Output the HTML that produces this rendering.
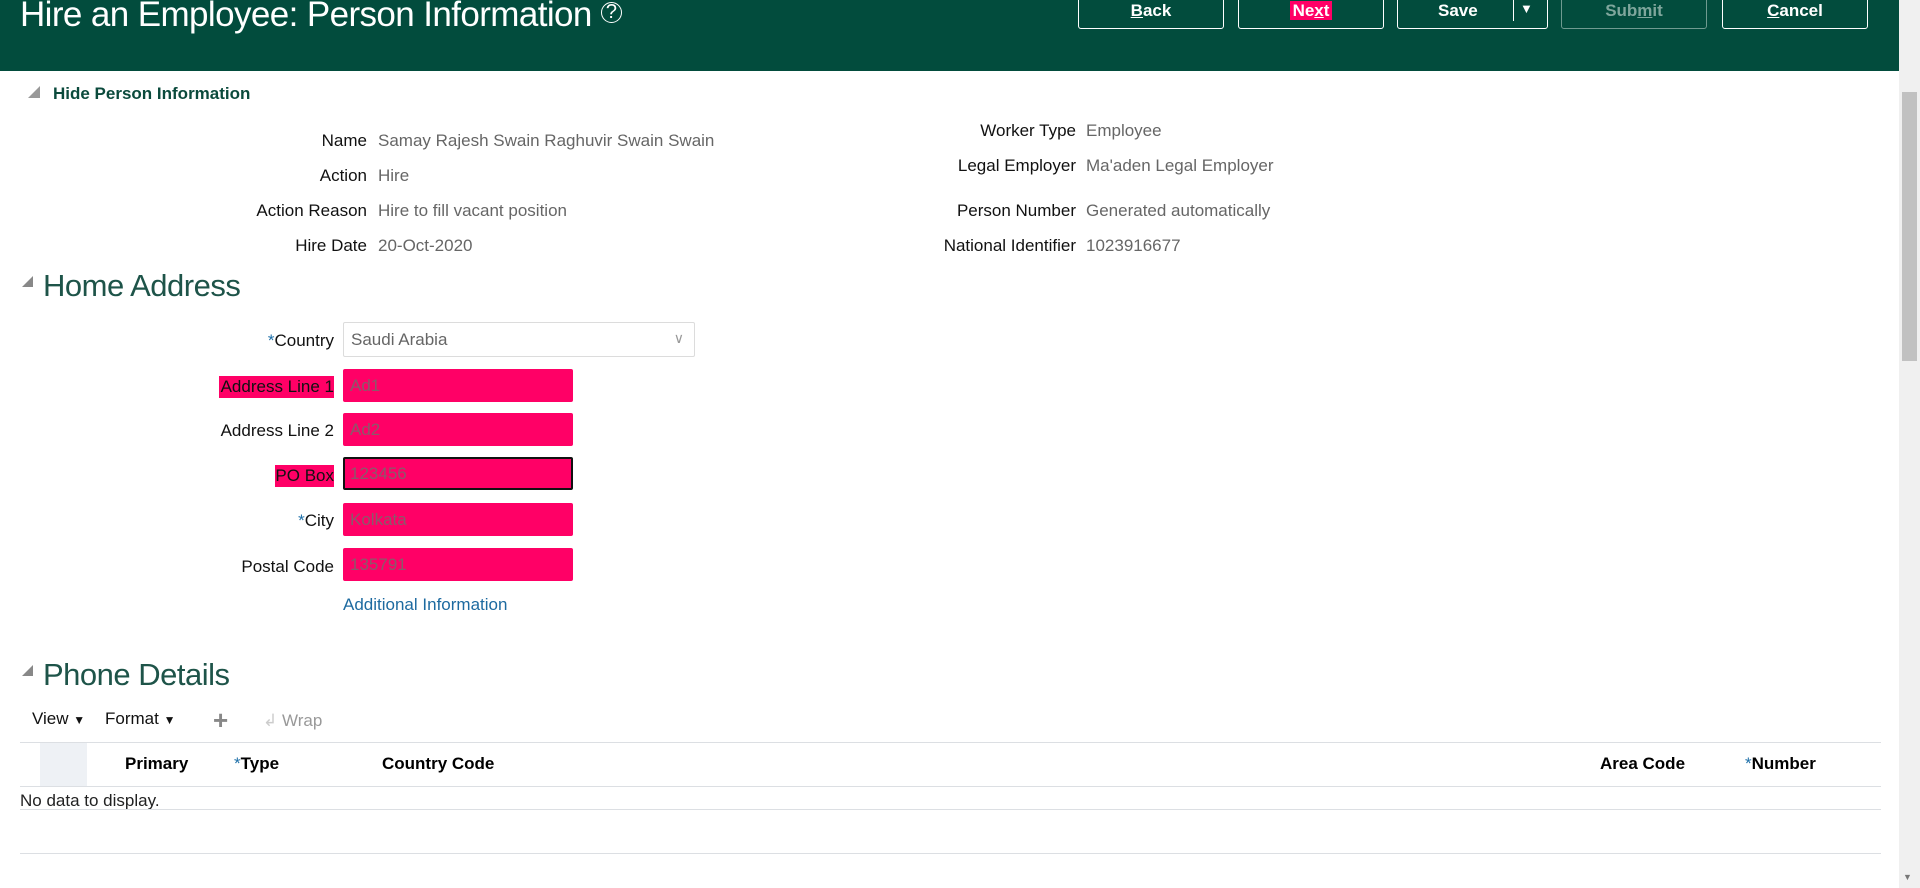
<!DOCTYPE html>
<html><head><meta charset="utf-8"><style>
*{margin:0;padding:0;box-sizing:border-box}
body{width:1920px;height:888px;overflow:hidden;background:#fff;font-family:"Liberation Sans",sans-serif;position:relative}
.a{position:absolute;white-space:nowrap}
.hdr{position:absolute;left:0;top:0;width:1899px;height:71px;background:#024c3d}
.btn{position:absolute;top:-4px;height:33px;border:1px solid #fff;border-radius:3px;color:#fff;font-size:17px;font-weight:bold;text-align:center;line-height:28px}
.lbl{position:absolute;text-align:right;font-size:17px;color:#111;line-height:20px}
.val{position:absolute;font-size:17px;color:#666;line-height:20px}
.inp{position:absolute;left:343px;width:230px;height:33px;background:#ff0066;border-radius:2px;color:#8a5a6a;font-size:17px;line-height:33px;padding-left:7px}
.star{color:#1d6fa8}
.th{position:absolute;top:754px;font-size:17px;font-weight:bold;color:#000;line-height:20px}
.hl{position:absolute;left:20px;width:1861px;height:1px;background:#dcdfe3}
</style></head><body>
<div class="hdr"></div>
<div class="a" style="left:20px;top:-7px;font-size:35px;color:#fff;font-weight:300;line-height:44px;letter-spacing:-0.6px">Hire an Employee: Person Information <span style="font-size:20px;display:inline-block;width:21px;height:21px;border:1.5px solid #fff;border-radius:50%;line-height:18px;text-align:center;vertical-align:8px;letter-spacing:0">?</span></div>
<div class="btn" style="left:1078px;width:146px"><u>B</u>ack</div>
<div class="btn" style="left:1238px;width:146px"><span style="background:#ff0066;padding:0 3px">Ne<u>x</u>t</span></div>
<div class="btn" style="left:1397px;width:151px;text-align:left;padding-left:40px">Save<span style="position:absolute;left:115px;top:0;width:1px;height:24px;background:#fff"></span><span style="position:absolute;left:122px;top:-2px;font-size:13px">▼</span></div>
<div class="btn" style="left:1561px;width:146px;border-color:#6f9a90;color:#7fa69c">Sub<u>m</u>it</div>
<div class="btn" style="left:1722px;width:146px"><u>C</u>ancel</div>
<div class="a" style="left:1899px;top:0;width:21px;height:888px;background:#f0f0f0"></div>
<div class="a" style="left:1902px;top:92px;width:15px;height:269px;background:#c1c1c1"></div>
<div class="a" style="left:1903px;top:872px;font-size:9px;color:#777">▼</div>
<div class="a" style="left:28px;top:86px;width:0;height:0;border-left:12px solid transparent;border-bottom:12px solid #999"></div>
<div class="a" style="left:53px;top:84px;font-size:17px;font-weight:bold;color:#0b4a3c">Hide Person Information</div>
<div class="lbl" style="right:1553px;top:131px">Name</div><div class="val" style="left:378px;top:131px">Samay Rajesh Swain Raghuvir Swain Swain</div>
<div class="lbl" style="right:1553px;top:166px">Action</div><div class="val" style="left:378px;top:166px">Hire</div>
<div class="lbl" style="right:1553px;top:201px">Action Reason</div><div class="val" style="left:378px;top:201px">Hire to fill vacant position</div>
<div class="lbl" style="right:1553px;top:236px">Hire Date</div><div class="val" style="left:378px;top:236px">20-Oct-2020</div>
<div class="lbl" style="right:844px;top:121px">Worker Type</div><div class="val" style="left:1086px;top:121px">Employee</div>
<div class="lbl" style="right:844px;top:156px">Legal Employer</div><div class="val" style="left:1086px;top:156px">Ma'aden Legal Employer</div>
<div class="lbl" style="right:844px;top:201px">Person Number</div><div class="val" style="left:1086px;top:201px">Generated automatically</div>
<div class="lbl" style="right:844px;top:236px">National Identifier</div><div class="val" style="left:1086px;top:236px">1023916677</div>
<div class="a" style="left:22px;top:276px;width:0;height:0;border-left:11px solid transparent;border-bottom:11px solid #888"></div>
<div class="a" style="left:43px;top:268px;font-size:31px;color:#1e5449;font-weight:300;letter-spacing:-0.5px">Home Address</div>
<div class="lbl" style="right:1586px;top:331px"><span class="star">*</span>Country</div>
<div class="a" style="left:343px;top:322px;width:352px;height:35px;border:1px solid #dcdcdc;border-radius:2px;font-size:17px;color:#666;line-height:33px;padding-left:7px">Saudi Arabia<span style="position:absolute;right:10px;top:-1px;color:#999;font-size:14px">&#8744;</span></div>
<div class="lbl" style="right:1586px;top:376px;background:#ff0066;padding:1px 0 1px 2px">Address Line 1</div>
<div class="inp" style="top:369px">Ad1</div>
<div class="lbl" style="right:1586px;top:421px">Address Line 2</div>
<div class="inp" style="top:413px">Ad2</div>
<div class="lbl" style="right:1586px;top:465px;background:#ff0066;padding:1px 0 1px 0">PO Box</div>
<div class="inp" style="top:457px;border:2px solid #111;line-height:29px;padding-left:5px">123456</div>
<div class="lbl" style="right:1586px;top:511px"><span class="star">*</span>City</div>
<div class="inp" style="top:503px">Kolkata</div>
<div class="lbl" style="right:1586px;top:557px">Postal Code</div>
<div class="inp" style="top:548px">135791</div>
<div class="a" style="left:343px;top:595px;font-size:17px;color:#1d6aa0">Additional Information</div>
<div class="a" style="left:22px;top:665px;width:0;height:0;border-left:11px solid transparent;border-bottom:11px solid #888"></div>
<div class="a" style="left:43px;top:657px;font-size:31px;color:#1e5449;font-weight:300;letter-spacing:-0.5px">Phone Details</div>
<div class="a" style="left:32px;top:709px;font-size:17px;color:#111">View <span style="font-size:12px">▼</span></div>
<div class="a" style="left:105px;top:709px;font-size:17px;color:#111">Format <span style="font-size:12px">▼</span></div>
<div class="a" style="left:213px;top:705px;font-size:26px;color:#888;font-weight:bold">+</div>
<div class="a" style="left:263px;top:711px;font-size:17px;color:#999"><span style="color:#ccc">&#8626;</span> Wrap</div>
<div class="hl" style="top:742px"></div>
<div class="a" style="left:40px;top:743px;width:47px;height:43px;background:#eef1f5"></div>
<div class="th" style="left:125px">Primary</div>
<div class="th" style="left:234px"><span class="star" style="font-weight:normal">*</span>Type</div>
<div class="th" style="left:382px">Country Code</div>
<div class="th" style="left:1600px">Area Code</div>
<div class="th" style="left:1745px"><span class="star" style="font-weight:normal">*</span>Number</div>
<div class="hl" style="top:786px"></div>
<div class="a" style="left:20px;top:791px;font-size:17px;color:#222">No data to display.</div>
<div class="hl" style="top:809px"></div>
<div class="hl" style="top:853px"></div>
</body></html>
